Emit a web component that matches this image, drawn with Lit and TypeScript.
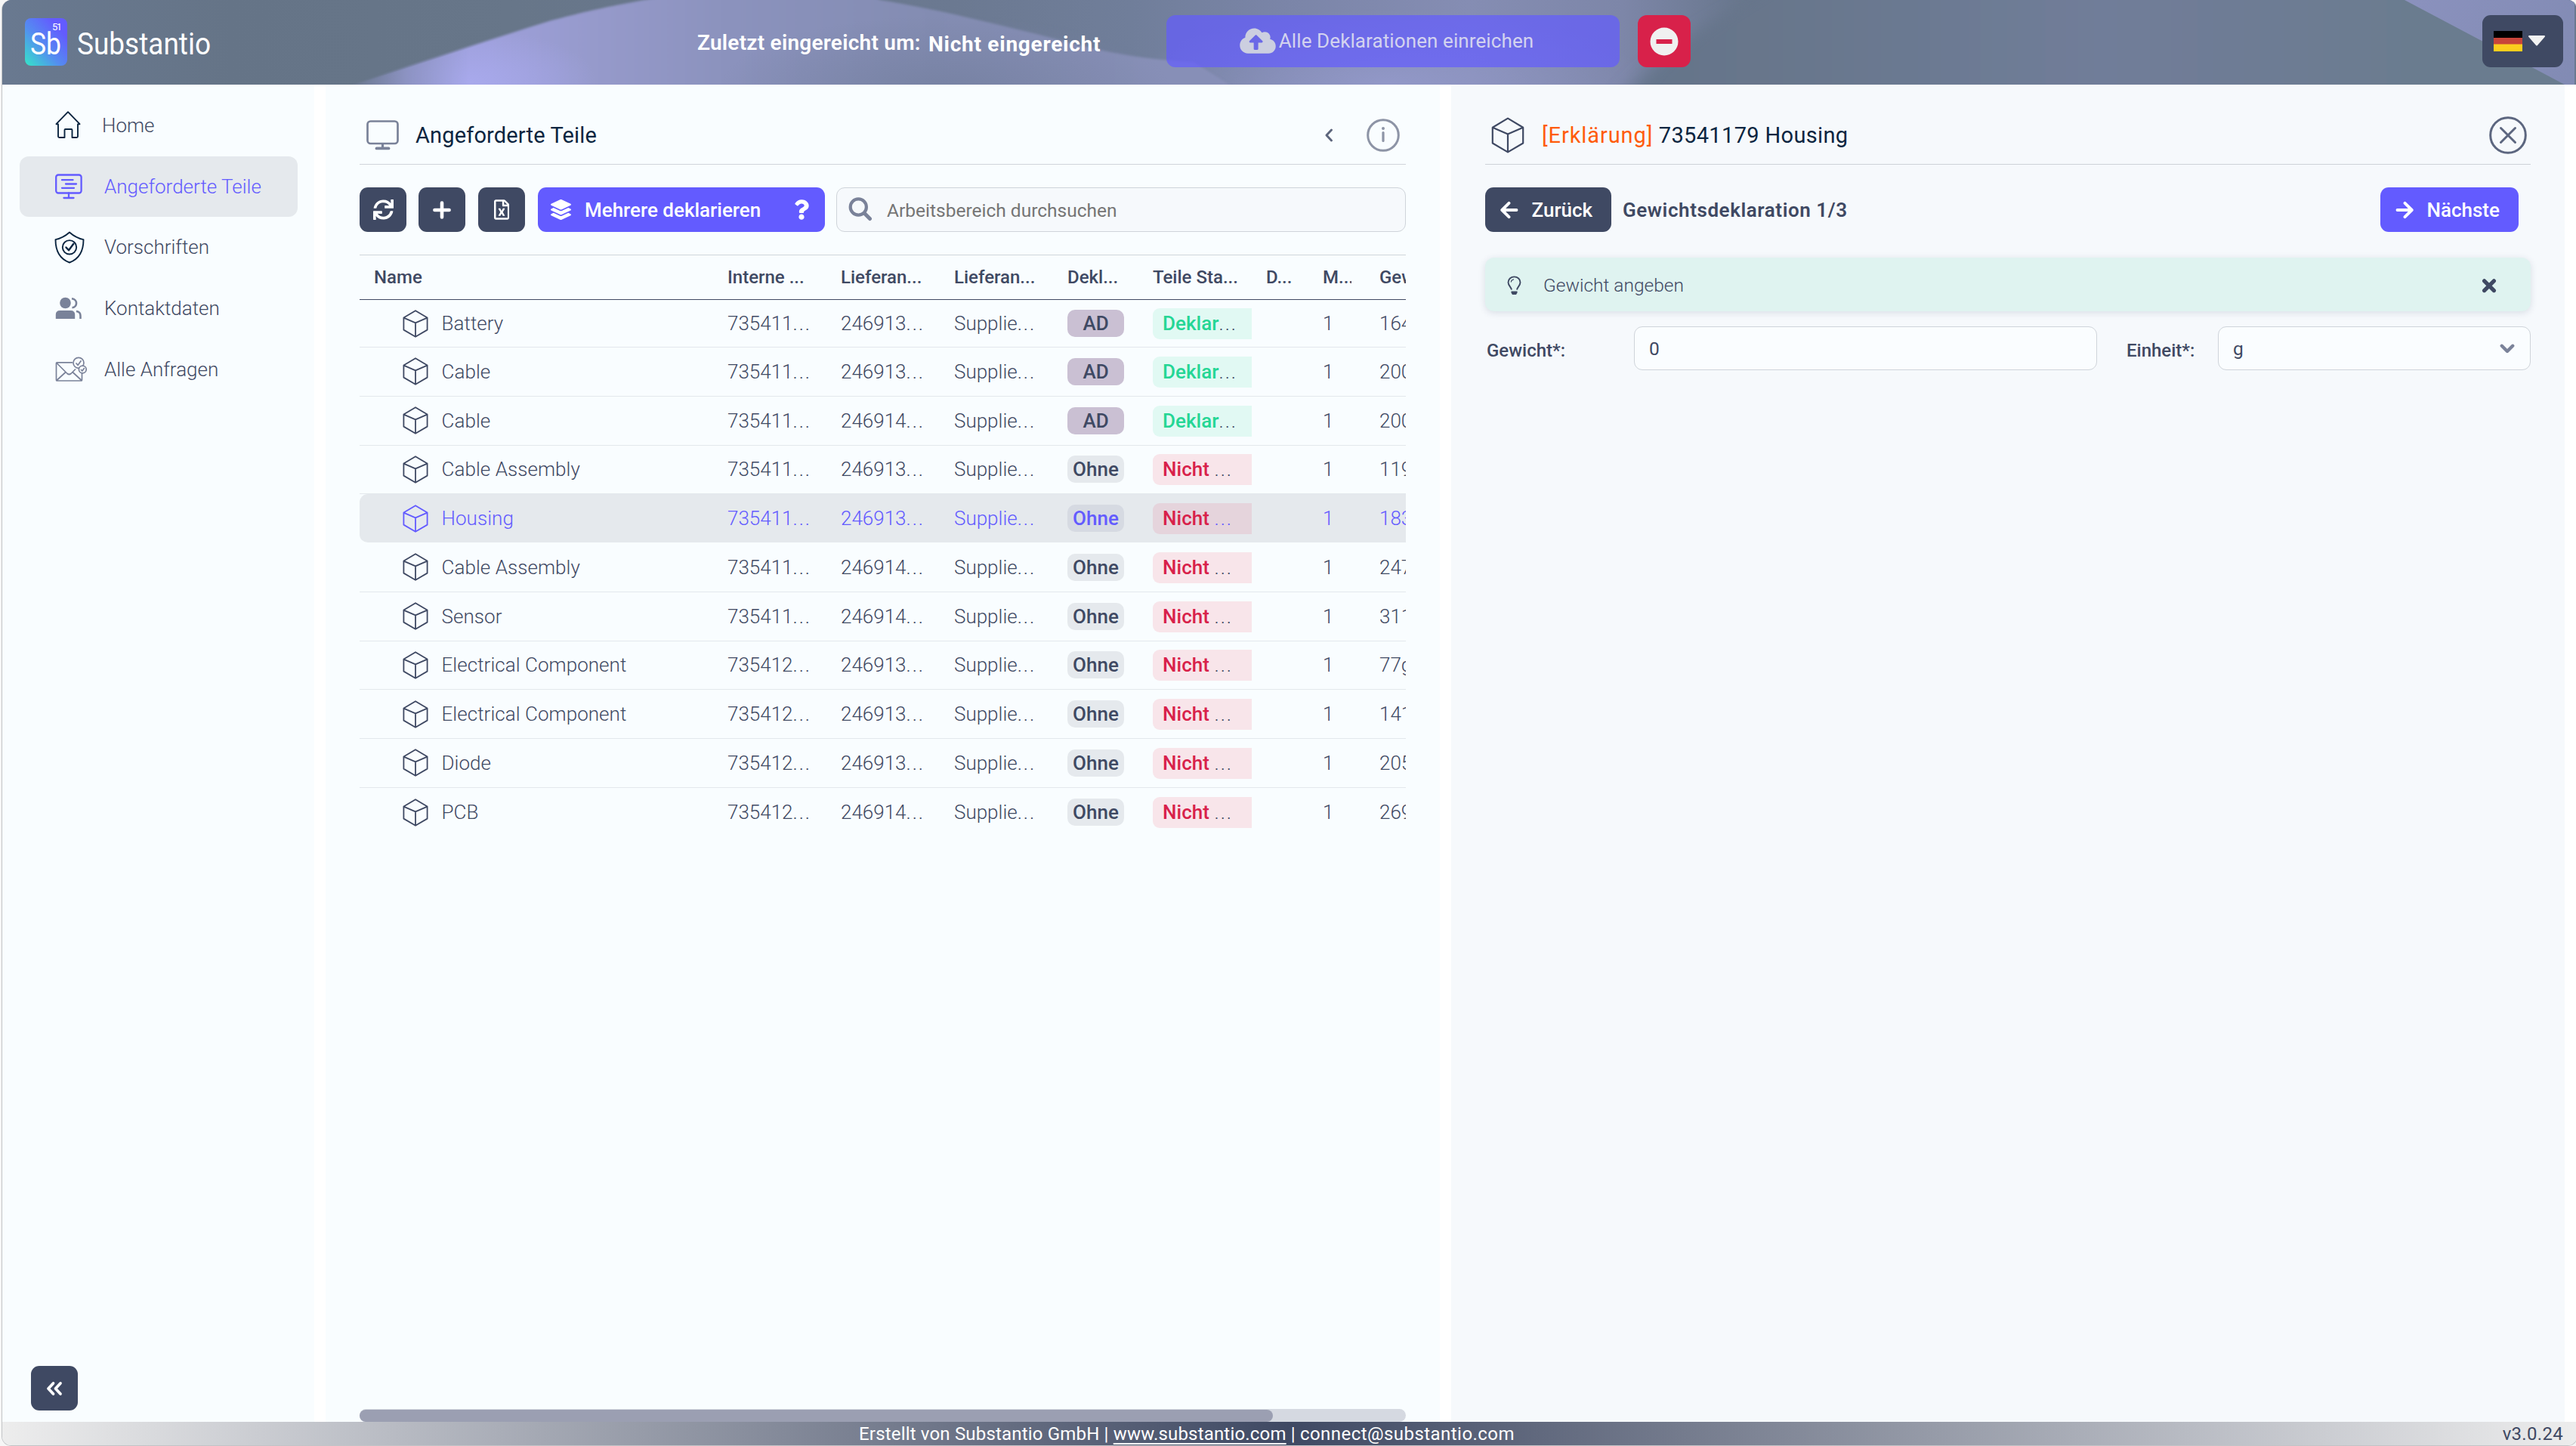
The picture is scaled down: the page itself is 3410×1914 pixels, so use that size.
import { LitElement, html, svg, css } from "lit";
import { customElement } from "lit/decorators.js";
import { classMap } from "lit/directives/class-map.js";

const shared = css`
  * { box-sizing: border-box; }
  svg { display: block; flex: none; }
  .btn {
    display: flex;
    align-items: center;
    height: 59px;
    border-radius: 11px;
    background: #3f4963;
    color: #fff;
    font-size: 26px;
    white-space: nowrap;
    flex: none;
  }
  .square { width: 62px; justify-content: center; }
  .primary { background: #635bff; }
`;

const cube = (w: number, h: number, stroke: number) => html`
  <svg width=${w} height=${h} viewBox="0 0 34 37" fill="none" stroke="currentColor" stroke-width=${stroke} stroke-linejoin="round">
    <path d="M17 1.2 32.6 10.6V26.6L17 35.8 1.4 26.6V10.6ZM1.4 10.6 17 17.4 32.6 10.6M17 17.4V35.8" />
  </svg>`;

const homeIcon = html`
  <svg width="36" height="38" viewBox="0 0 36 38" fill="none" stroke="#0b2540" stroke-width="1.9" stroke-linejoin="round">
    <path d="M2.5 18.2 18 2.2 33.500 18.200 31 18.500V34.500Q31 36 29.500 36H23.500V26Q23.500 25 22.500 25H14.500Q13.500 25 13.500 26V36H6.500Q5 36 5 34.500V18.500Z" />
  </svg>`;

const requestedIcon = html`
  <svg width="36" height="34" viewBox="0 0 36 34" fill="none" stroke="#635bff" stroke-width="2.300" stroke-linecap="round">
    <rect x="1.200" y="1.500" width="33.400" height="24" rx="3" />
    <path d="M9 8.200H23.500M14 13.500H28M9 18.800H25M18 25.500V31.500M11.500 32H24.500" />
  </svg>`;

const shieldIcon = html`
  <svg width="40" height="43" viewBox="0 0 40 43" fill="none" stroke="#0b2540" stroke-width="1.900" stroke-linejoin="round" stroke-linecap="round">
    <path d="M20 1.500C15 6 8.500 9.500 1.500 11.200 1.500 27 8 37 20 41.500 32 37 38.500 27 38.500 11.200 31.500 9.500 25 6 20 1.500Z" />
    <circle cx="20" cy="21.300" r="9.200" />
    <path d="M15.500 21.500 19 25.300 25.300 16.800" stroke-width="2.400" />
  </svg>`;

const peopleIcon = html`
  <svg width="36" height="30" viewBox="0 0 36 30" fill="#7a8299">
    <circle cx="13.500" cy="8" r="7.300" />
    <path d="M.8 29V23.500Q.8 18 6.500 18H20.500Q26.200 18 26.200 23.500V29Z" />
    <path d="M22 2.200C30 3 30 13.500 22.500 14.200M28 19Q33.500 19.500 33.500 25V29" fill="none" stroke="#7a8299" stroke-width="2.600" />
  </svg>`;

const mailIcon = html`
  <svg width="42" height="34" viewBox="0 0 42 34" fill="none" stroke="#7a8299" stroke-width="1.700" stroke-linejoin="round">
    <path d="M23 7.800H2.500Q1.500 7.800 1.500 8.800V31Q1.500 32 2.500 32H34.500Q35.500 32 35.500 31V21M2 8.500 16 22.500Q18.500 24.500 21 22.500L27 16.500M2 31.500 14 20.500M35 31.500 23 20.500" />
    <circle cx="31" cy="8.300" r="7" />
    <circle cx="36.300" cy="17" r="4.900" fill="#f9fdff" />
    <path d="M27.500 8.500 30.200 11.300 34.500 5.300M34 17 35.800 19 38.800 14.900" />
  </svg>`;

const monitorIcon = html`
  <svg width="43" height="40" viewBox="0 0 43 40" fill="none" stroke="#7a8299" stroke-width="2.700" stroke-linecap="round">
    <rect x="1.500" y="1.500" width="40" height="29.500" rx="4" />
    <path d="M21.500 31V37" stroke-width="3.200" stroke-linecap="butt" />
    <path d="M13.500 37.400H29.500" stroke-width="3.800" />
  </svg>`;

const syncIcon = html`
  <svg width="27" height="27" viewBox="0 0 512 512" fill="#fff">
    <path d="M440.65 12.57l4 82.77A247.16 247.16 0 0 0 255.83 8C134.73 8 33.91 94.92 12.29 209.82A12 12 0 0 0 24.09 224h49.05a12 12 0 0 0 11.67-9.26 175.91 175.91 0 0 1 317-56.94l-101.46-4.86a12 12 0 0 0-12.57 12v47.41a12 12 0 0 0 12 12H500a12 12 0 0 0 12-12V12a12 12 0 0 0-12-12h-47.37a12 12 0 0 0-11.98 12.57zM255.83 432a175.61 175.61 0 0 1-146-77.8l101.8 4.87a12 12 0 0 0 12.57-12v-47.4a12 12 0 0 0-12-12H12a12 12 0 0 0-12 12V500a12 12 0 0 0 12 12h47.35a12 12 0 0 0 12-12.6l-4.15-82.57A247.17 247.17 0 0 0 255.83 504c121.11 0 221.93-86.92 243.55-201.82a12 12 0 0 0-11.8-14.18h-49.05a12 12 0 0 0-11.67 9.26A175.86 175.86 0 0 1 255.83 432z" />
  </svg>`;

const plusIcon = html`
  <svg width="26" height="26" viewBox="0 0 26 26" stroke="#fff" stroke-width="4.600" stroke-linecap="round">
    <path d="M13 3.600V22.400M3.400 13H22.600" />
  </svg>`;

const excelIcon = html`
  <svg width="20" height="27" viewBox="0 0 384 512" fill="#fff">
    <path d="M369.9 97.9L286 14C277 5 264.800 0 252.100 0H48C21.500 0 0 21.500 0 48v416c0 26.500 21.500 48 48 48h288c26.500 0 48-21.500 48-48V131.900c0-12.700-5.100-25-14.100-34zM332.100 128H256V51.900l76.100 76.100zM48 464V48h160v104c0 13.300 10.700 24 24 24h112v288H48zm212-240h-28.800c-4.400 0-8.400 2.400-10.500 6.300-18 33.100-22.200 42.400-28.600 57.700-13.900-29.100-6.900-17.300-28.600-57.700-2.100-3.900-6.200-6.300-10.600-6.300H124c-9.300 0-15 10-10.400 18l46.300 78-46.300 78c-4.700 8 1.100 18 10.400 18h28.900c4.400 0 8.400-2.400 10.500-6.300 21.700-40 23-45 28.600-57.700 14.900 30.200 5.900 15.900 28.600 57.700 2.100 3.900 6.200 6.300 10.600 6.300H260c9.300 0 15-10 10.400-18L224 320c.7-1.100 30.300-50.500 46.300-78 4.700-8-1.100-18-10.300-18z" />
  </svg>`;

const layersIcon = html`
  <svg width="27" height="27" viewBox="0 0 512 512" fill="#fff">
    <path d="M12.410 148.020l232.940 105.670c6.800 3.090 14.490 3.090 21.290 0l232.940-105.670c16.550-7.510 16.550-32.520 0-40.030L266.650 2.310a25.607 25.607 0 0 0-21.290 0L12.410 107.980c-16.550 7.510-16.550 32.530 0 40.040zm487.180 88.280l-58.090-26.330-161.640 73.270c-7.560 3.430-15.590 5.170-23.860 5.170s-16.290-1.740-23.860-5.170L70.510 209.970l-58.100 26.330c-16.550 7.500-16.550 32.500 0 40l232.940 105.590c6.800 3.080 14.490 3.080 21.290 0L499.590 276.300c16.550-7.500 16.550-32.500 0-40zm0 127.800l-57.870-26.230-161.860 73.370c-7.560 3.430-15.590 5.170-23.860 5.170s-16.290-1.740-23.860-5.170L70.290 337.870 12.410 364.100c-16.550 7.500-16.550 32.500 0 40l232.940 105.590c6.800 3.080 14.490 3.080 21.290 0L499.590 404.100c16.550-7.500 16.550-32.500 0-40z" />
  </svg>`;

const questionIcon = html`
  <svg width="20" height="27" viewBox="0 0 384 512" fill="#fff">
    <path d="M202.021 0C122.202 0 70.503 32.703 29.914 91.026c-7.363 10.580-5.093 25.086 5.178 32.874l43.138 32.709c10.373 7.865 25.132 6.026 33.253-4.148 25.049-31.381 43.630-49.449 82.757-49.449 30.764 0 68.816 19.799 68.816 49.631 0 22.552-18.617 34.134-48.993 51.164-35.423 19.860-82.299 44.576-82.299 106.405V320c0 13.255 10.745 24 24 24h72.471c13.255 0 24-10.745 24-24v-5.773c0-42.860 125.268-44.645 125.268-160.627C377.504 66.256 286.902 0 202.021 0zM192 373.459c-38.196 0-69.271 31.075-69.271 69.271 0 38.195 31.075 69.270 69.271 69.270s69.271-31.075 69.271-69.271-31.075-69.270-69.271-69.270z" />
  </svg>`;

const searchIcon = html`
  <svg width="32" height="32" viewBox="0 0 32 32" fill="none" stroke="#7a8299" stroke-linecap="round">
    <circle cx="13.300" cy="13" r="10.600" stroke-width="4.200" />
    <path d="M21.500 21.500 28.500 28.500" stroke-width="5" />
  </svg>`;

const cloudIcon = html`
  <svg width="48" height="38" viewBox="0 0 640 512" fill="#cccfe0">
    <path d="M537.600 226.600c4.100-10.700 6.400-22.400 6.400-34.600 0-53-43-96-96-96-19.700 0-38.100 6-53.300 16.200C367 64.200 315.300 32 256 32c-88.400 0-160 71.600-160 160 0 2.700.1 5.400.2 8.100C40.200 219.800 0 273.200 0 336c0 79.500 64.500 144 144 144h368c70.700 0 128-57.300 128-128 0-61.900-44-113.600-102.400-125.400zM393.400 288H328v112c0 8.800-7.200 16-16 16h-48c-8.800 0-16-7.200-16-16V288h-65.400c-14.300 0-21.400-17.200-11.300-27.400l105.400-105.400c6.200-6.200 16.400-6.200 22.600 0l105.400 105.400c10.100 10.200 2.900 27.400-11.300 27.400z" />
  </svg>`;

const arrow = (flip: boolean) => html`
  <svg width="24" height="24" viewBox="0 0 24 24" fill="none" stroke="#fff" stroke-width="3.900" stroke-linecap="round" stroke-linejoin="round">
    ${flip
      ? svg`<path d="M2.500 12H21M12.500 2.800 21.700 12 12.500 21.200" />`
      : svg`<path d="M21.500 12H3M11.500 2.800 2.300 12 11.500 21.200" />`}
  </svg>`;

@customElement("app-header")
class AppHeader extends LitElement {
  static styles = [
    shared,
    css`
      :host { display: block; height: 112px; position: relative; overflow: hidden; background: #697990; }
      .waves { position: absolute; inset: 0; }
      .bar { position: relative; display: flex; align-items: flex-start; height: 112px; color: #fff; }
      .logo { margin: 24px 0 0 30px; }
      .brand { margin: 24px 630px 0 14px; }
      .label { margin-top: 40px; width: 306px; font-size: 28px; line-height: 34px; font-weight: 600; letter-spacing: 0.25px; white-space: nowrap; }
      .value { margin-top: 42px; width: 315px; font-size: 28px; line-height: 34px; font-weight: 700; letter-spacing: 0.75px; white-space: nowrap; }
      .submit {
        margin-top: 20px;
        width: 600px;
        height: 69px;
        border-radius: 12px;
        background: rgba(99, 91, 255, 0.7);
        display: flex;
        align-items: center;
        justify-content: center;
        gap: 4px;
        padding-right: 17px;
        font-size: 26px;
        letter-spacing: 0.1px;
        color: #d3d3ef;
        padding-bottom: 1px;
        white-space: nowrap;
      }
      .deny {
        margin: 20px 0 0 24px;
        width: 70px;
        height: 69px;
        border-radius: 12px;
        background: #d8214a;
        display: flex;
        align-items: center;
        justify-content: center;
      }
      .lang {
        margin: 20px 18px 0 auto;
        width: 107px;
        height: 69px;
        border-radius: 11px;
        background: #3f4963;
        display: flex;
        align-items: center;
        padding-left: 15px;
        gap: 7px;
      }
    `,
  ];

  render() {
    return html`
      <svg class="waves" width="3405" height="112" viewBox="3 0 3405 112" preserveAspectRatio="none">
        <defs>
          <linearGradient id="base" x1="0" x2="1">
            <stop offset="0" stop-color="#697990" />
            <stop offset=".09" stop-color="#657487" />
            <stop offset=".2" stop-color="#677689" />
            <stop offset=".37" stop-color="#6b7991" />
            <stop offset=".44" stop-color="#707e9a" />
            <stop offset=".5" stop-color="#7b85a8" />
            <stop offset=".57" stop-color="#858db3" />
            <stop offset=".63" stop-color="#7d86a8" />
            <stop offset=".68" stop-color="#66758a" />
            <stop offset=".78" stop-color="#6c7b94" />
            <stop offset=".88" stop-color="#6f7d98" />
            <stop offset="1" stop-color="#6b7b90" />
          </linearGradient>
          <linearGradient id="hill" gradientUnits="userSpaceOnUse" x1="470" x2="1560" y1="0" y2="0">
            <stop offset="0" stop-color="#989bd6" />
            <stop offset=".16" stop-color="#9d9fda" />
            <stop offset=".3" stop-color="#9599ca" />
            <stop offset=".45" stop-color="#8b92bd" />
            <stop offset=".7" stop-color="#838cb2" />
            <stop offset="1" stop-color="#878fb7" />
          </linearGradient>
          <radialGradient id="peak" gradientUnits="userSpaceOnUse" cx="0" cy="0" r="1" gradientTransform="translate(620 108) scale(170 70)">
            <stop offset="0" stop-color="#a8a9ec" />
            <stop offset="1" stop-color="#a8a9ec" stop-opacity="0" />
          </radialGradient>
          <radialGradient id="hollow" gradientUnits="userSpaceOnUse" cx="0" cy="0" r="1" gradientTransform="translate(1250 120) scale(300 100)">
            <stop offset="0" stop-color="#7782a3" />
            <stop offset="1" stop-color="#7782a3" stop-opacity="0" />
          </radialGradient>
          <radialGradient id="glow" gradientUnits="userSpaceOnUse" cx="0" cy="0" r="1" gradientTransform="translate(1840 112) scale(340 100)">
            <stop offset="0" stop-color="#9298c8" />
            <stop offset="1" stop-color="#9298c8" stop-opacity="0" />
          </radialGradient>
          <linearGradient id="dark" gradientUnits="userSpaceOnUse" x1="2160" x2="3200" y1="0" y2="0">
            <stop offset="0" stop-color="#64748a" />
            <stop offset=".16" stop-color="#67768b" />
            <stop offset=".6" stop-color="#707d99" />
            <stop offset="1" stop-color="#6b7b8f" />
          </linearGradient>
          <linearGradient id="corner" gradientUnits="userSpaceOnUse" x1="3200" x2="3400" y1="0" y2="100">
            <stop offset="0" stop-color="#8a91bd" />
            <stop offset="1" stop-color="#828bb4" />
          </linearGradient>
          <linearGradient id="fade" gradientUnits="userSpaceOnUse" x1="455" x2="620" y1="0" y2="0">
            <stop offset="0" stop-color="#fff" stop-opacity="0" />
            <stop offset=".5" stop-color="#fff" stop-opacity=".65" />
            <stop offset="1" stop-color="#fff" />
          </linearGradient>
          <mask id="soft" maskUnits="userSpaceOnUse" x="0" y="-30" width="3410" height="180">
            <rect x="0" y="-30" width="3410" height="180" fill="url(#fade)" />
          </mask>
          <filter id="b1" x="-5%" y="-50%" width="110%" height="200%"><feGaussianBlur stdDeviation="1.5" /></filter>
          <filter id="b2" x="-10%" y="-50%" width="120%" height="200%"><feGaussianBlur stdDeviation="16 4" /></filter>
        </defs>
        <rect x="0" width="3410" height="112" fill="url(#base)" />
        <ellipse cx="1840" cy="112" rx="340" ry="100" fill="url(#glow)" />
        <g mask="url(#soft)">
          <path filter="url(#b1)" fill="url(#hill)" d="M450 118C540 88 640 55 730 27 790 11 830 4 870 -3L880-20H1120L1165 0C1250 14 1310 30 1380 47 1450 66 1500 78 1580 82L1640 120Z" />
          <path fill="url(#peak)" d="M450 118C540 90 640 57 730 29L800 40V118Z" />
          <ellipse cx="1250" cy="120" rx="300" ry="100" fill="url(#hollow)" />
        </g>
        <path filter="url(#b2)" fill="url(#dark)" d="M2350-20C2300 10 2210 50 2150 130H3500V-20Z" />
        <path fill="url(#corner)" d="M3183 0 3395 112H3410V0Z" />
      </svg>
      <div class="bar">
        <svg class="logo" width="56" height="63" viewBox="0 0 56 63" font-family="Roboto, sans-serif" fill="#fff">
          <defs>
            <linearGradient id="lg" x1="0" y1="1" x2="1" y2="0">
              <stop offset="0" stop-color="#34e6c8" />
              <stop offset=".42" stop-color="#548df0" />
              <stop offset=".8" stop-color="#635bff" />
            </linearGradient>
          </defs>
          <rect width="56" height="63" rx="8" fill="url(#lg)" />
          <text x="7" y="48" font-size="41" textLength="41" lengthAdjust="spacingAndGlyphs">Sb</text>
          <text x="36" y="16" font-size="13" textLength="13">51</text>
        </svg>
        <svg class="brand" width="190" height="63" viewBox="0 0 190 63" font-family="Roboto, sans-serif" fill="#fff">
          <text x="-1" y="48" font-size="40" textLength="177" lengthAdjust="spacingAndGlyphs">Substantio</text>
        </svg>
        <div class="label">Zuletzt eingereicht um:</div>
        <div class="value">Nicht eingereicht</div>
        <div class="submit">${cloudIcon}<span>Alle Deklarationen einreichen</span></div>
        <div class="deny">
          <svg width="38" height="38" viewBox="0 0 38 38">
            <circle cx="19" cy="19" r="18.500" fill="#f0f0f0" />
            <rect x="8.500" y="16" width="21" height="6" fill="#d8214a" />
          </svg>
        </div>
        <div class="lang">
          <svg width="38" height="27" viewBox="0 0 38 27">
            <rect width="38" height="9" fill="#000" />
            <rect y="9" width="38" height="9" fill="#c8443a" />
            <rect y="17.500" width="38" height="9.500" fill="#fbcd1e" />
          </svg>
          <svg width="24" height="15" viewBox="0 0 24 15">
            <path d="M2 1H22L12 12.500Z" fill="#f2f2f2" stroke="#f2f2f2" stroke-width="2" stroke-linejoin="round" />
          </svg>
        </div>
      </div>`;
  }
}

@customElement("app-nav")
class AppNav extends LitElement {
  static styles = [
    shared,
    css`
      :host { display: flex; flex-direction: column; width: 412.500px; padding: 14px 22px 15px 23px; background: #f9fdff; flex: none; }
      .item { display: flex; align-items: center; height: 80.600px; padding-left: 47px; font-size: 26px; font-weight: 310; color: #3f4963; border-radius: 12px; }
      .active { background: #e5e9ed; color: #635bff; }
      .icon { width: 65px; display: flex; flex: none; }
      .home .icon { width: 62px; }
      .home svg { margin: -2px 0 0 -1px; }
      .shield { padding-left: 46px; }
      .shield .icon { width: 66px; }
      .collapse { margin: auto 0 0 15px; }
    `,
  ];

  render() {
    const items: [unknown, string, string][] = [
      [homeIcon, "Home", "home"],
      [requestedIcon, "Angeforderte Teile", "active"],
      [shieldIcon, "Vorschriften", "shield"],
      [peopleIcon, "Kontaktdaten", "people"],
      [mailIcon, "Alle Anfragen", "mail"],
    ];
    return html`
      ${items.map(([icon, text, kind]) => html`
        <div class=${classMap({ item: true, [kind]: true })}>
          <span class="icon">${icon}</span><span>${text}</span>
        </div>`)}
      <div class="btn square collapse">
        <svg width="24" height="20" viewBox="0 0 24 20" fill="none" stroke="#fff" stroke-width="3.800" stroke-linecap="round" stroke-linejoin="round">
          <path d="M10.500 3 4 10 10.500 17M20 3 13.500 10 20 17" />
        </svg>
      </div>`;
  }
}

interface Part {
  name: string;
  part: string;
  supplier: string;
  type: string;
  weight: string;
}

const PARTS: Part[] = [
  { name: "Battery", part: "735411", supplier: "246913", type: "AD", weight: "164g" },
  { name: "Cable", part: "735411", supplier: "246913", type: "AD", weight: "200g" },
  { name: "Cable", part: "735411", supplier: "246914", type: "AD", weight: "200g" },
  { name: "Cable Assembly", part: "735411", supplier: "246913", type: "Ohne", weight: "119g" },
  { name: "Housing", part: "735411", supplier: "246913", type: "Ohne", weight: "183g" },
  { name: "Cable Assembly", part: "735411", supplier: "246914", type: "Ohne", weight: "247g" },
  { name: "Sensor", part: "735411", supplier: "246914", type: "Ohne", weight: "311g" },
  { name: "Electrical Component", part: "735412", supplier: "246913", type: "Ohne", weight: "77g" },
  { name: "Electrical Component", part: "735412", supplier: "246913", type: "Ohne", weight: "141g" },
  { name: "Diode", part: "735412", supplier: "246913", type: "Ohne", weight: "205g" },
  { name: "PCB", part: "735412", supplier: "246914", type: "Ohne", weight: "269g" },
];

@customElement("parts-panel")
class PartsPanel extends LitElement {
  static styles = [
    shared,
    css`
      :host { display: flex; flex-direction: column; width: 1475px; padding: 0 45px; background: #f9fdff; flex: none; }
      .title { display: flex; align-items: center; height: 106px; padding: 29px 8px 0 9px; border-bottom: 1px solid #d0d5da; font-size: 29px; letter-spacing: 0.15px; color: #0b2540; }
      .title .text { margin-left: 22px; flex: 1; }
      .title .back { margin-right: 44px; }
      .tools { display: flex; height: 120px; padding-top: 30px; border-bottom: 1px solid #d0d5da; }
      .tools .square { margin-right: 16px; }
      .tools .square:nth-child(2) { margin-right: 17px; }
      .declare { width: 380px; padding: 0 21px 0 17px; margin: 0 15px 0 1px; font-weight: 480; }
      .declare .text { flex: 1; margin-left: 18px; }
      .search { flex: 1; height: 59px; display: flex; align-items: center; border: 1px solid #cfd4da; border-radius: 11px; background: #f6f9fc; padding-left: 15px; font-size: 24.500px; color: #757575; }
      .search svg { margin: -2px 19px 0 0; }
      .search span { padding-top: 2px; }
      .row {
        display: grid;
        grid-template-columns: 487px 150px 150px 150px 113px 150px 75px 75px 35px;
        height: 64.750px;
        align-items: center;
        border-bottom: 1px solid #e3e8ec;
        color: #3f4963;
        font-size: 26px;
        font-weight: 310;
        overflow: hidden;
        white-space: nowrap;
      }
      .row:last-child { border-bottom: 0; }
      .head { height: 59px; border-bottom: 1px solid #3f4963; font-size: 24px; font-weight: 500; }
      .head .name { padding-left: 19px; }
      .head + .row { height: 63px; }
      .cell { overflow: hidden; margin-right: 37px; }
      .cell i { font-style: normal; letter-spacing: 1.900px; }
      .name { display: flex; align-items: center; padding-left: 57px; gap: 17.500px; margin-right: 0; letter-spacing: 0.050px; }
      .wide { margin-right: 19px; }
      .last { margin-right: 0; }
      .selected { background: #e5e9ed; color: #635bff; border-bottom-color: #f9fdff; border-radius: 11px 0 0 11px; }
      .selected .tag { background: #d6dae2; }
      .tag { width: 75px; height: 36px; border-radius: 10px; background: #e5e9ed; display: flex; align-items: center; justify-content: center; font-weight: 490; }
      .ad { background: #cac0d3; }
      .status { height: 41px; line-height: 41px; padding-left: 13px; border-radius: 9px 0 0 9px; background: #f8e5ea; margin-top: 1px; }
      .status b { font-weight: 490; color: #d8214a; letter-spacing: 0.050px; }
      .declared { background: #e1f9f3; }
      .declared b { color: #25d695; }
      .selected .status { background: #e5d4dc; }
      .track { margin-top: auto; height: 17px; border-radius: 9px; background: #d5d9e1; padding-top: 1px; }
      .thumb { width: 1209px; height: 16px; border-radius: 8px; background: #9b9fb2; }
    `,
  ];

  render() {
    const heads = ["Interne ...", "Lieferan...", "Lieferan...", "Dekl..."];
    return html`
      <div class="title">
        ${monitorIcon}
        <span class="text">Angeforderte Teile</span>
        <svg class="back" width="12" height="18" viewBox="0 0 12 18" fill="none" stroke="#5d667d" stroke-width="2.900" stroke-linecap="round" stroke-linejoin="round">
          <path d="M9.500 2 3 9 9.500 16" />
        </svg>
        <svg width="44" height="44" viewBox="0 0 44 44" fill="none" stroke="#8d94a6">
          <circle cx="22" cy="22" r="20.300" stroke-width="3" />
          <path d="M22 18.500V29.500" stroke-width="3.200" stroke-linecap="round" />
          <circle cx="22" cy="13" r="2" fill="#8d94a6" stroke="none" />
        </svg>
      </div>
      <div class="tools">
        <div class="btn square">${syncIcon}</div>
        <div class="btn square">${plusIcon}</div>
        <div class="btn square">${excelIcon}</div>
        <div class="btn primary declare">${layersIcon}<span class="text">Mehrere deklarieren</span>${questionIcon}</div>
        <div class="search">${searchIcon}<span>Arbeitsbereich durchsuchen</span></div>
      </div>
      <div>
        <div class="row head">
          <div class="cell name">Name</div>
          ${heads.map((h) => html`<div class="cell wide">${h}</div>`)}
          <div class="cell wide">Teile Sta...</div>
          <div class="cell wide">D...</div>
          <div class="cell">M...</div>
          <div class="cell last">Gewicht</div>
        </div>
        ${PARTS.map((p) => {
          const ad = p.type === "AD";
          return html`
            <div class=${classMap({ row: true, selected: p.name === "Housing" })}>
              <div class="cell name">${cube(34, 37, 1.8)}<span>${p.name}</span></div>
              <div class="cell wide">${p.part}<i>...</i></div>
              <div class="cell wide">${p.supplier}<i>...</i></div>
              <div class="cell wide">Supplie<i>...</i></div>
              <div class="cell wide"><div class=${classMap({ tag: true, ad })}>${p.type}</div></div>
              <div class="cell wide"><div class=${classMap({ status: true, declared: ad })}><b>${ad ? "Deklar" : "Nicht "}</b><i>...</i></div></div>
              <div></div>
              <div class="cell">1</div>
              <div class="cell last">${p.weight}</div>
            </div>`;
        })}
      </div>
      <div class="track"><div class="thumb"></div></div>`;
  }
}

@customElement("declaration-panel")
class DeclarationPanel extends LitElement {
  static styles = [
    shared,
    css`
      :host { display: block; width: 1474px; margin-left: -0.500px; padding: 0 45px; background: #f6f9fc; flex: none; }
      .title { display: flex; align-items: center; height: 106px; padding: 29px 5px 0 8px; border-bottom: 1px solid #cdd2d8; font-size: 29px; letter-spacing: 0.350px; color: #0b2540; }
      .title .text { margin-left: 23px; flex: 1; }
      .title em { font-style: normal; color: #ff5c0a; letter-spacing: 0.900px; }
      .title svg { color: #3f4963; }
      .steps { display: flex; align-items: center; padding: 30px 16px 34px 0; }
      .back { width: 167px; padding-left: 20px; gap: 17.500px; font-weight: 480; }
      .next { width: 183px; padding-left: 20px; gap: 17.500px; font-weight: 480; }
      .steps h2 { margin: 0 0 0 15px; flex: 1; font-size: 26px; font-weight: 600; letter-spacing: 0.570px; color: #3f4963; }
      .hint { display: flex; align-items: center; height: 71px; padding: 2px 45px 0 29px; border-radius: 12px; background: #dff3f0; box-shadow: 0 2px 10px rgba(40, 60, 90, 0.14); font-size: 24.500px; font-weight: 320; color: #3f4963; }
      .hint span { flex: 1; margin-left: 29px; padding-bottom: 1px; }
      .form { display: flex; align-items: center; padding-top: 20px; color: #3f4963; }
      .form label { font-size: 24px; font-weight: 500; padding: 5px 0 0 2px; width: 197px; }
      .form label.unit { width: 160px; padding-left: 39px; }
      .field { display: flex; align-items: center; width: 613px; height: 58px; border: 1px solid #cfd4da; border-radius: 11px; background: #fafdff; padding: 0 20px 0 19px; font-size: 24.500px; }
      .select { width: 414px; justify-content: space-between; }
    `,
  ];

  render() {
    return html`
      <div class="title">
        ${cube(44, 48, 1.7)}
        <span class="text"><em>[Erklärung]</em> 73541179 Housing</span>
        <svg width="50" height="50" viewBox="0 0 50 50" fill="none" stroke="#5c667f" stroke-width="3" stroke-linecap="round">
          <circle cx="25" cy="25" r="23.300" />
          <path d="M15.500 15.500 34.500 34.500M34.500 15.500 15.500 34.500" />
        </svg>
      </div>
      <div class="steps">
        <div class="btn back">${arrow(false)}<span>Zurück</span></div>
        <h2>Gewichtsdeklaration 1/3</h2>
        <div class="btn primary next">${arrow(true)}<span>Nächste</span></div>
      </div>
      <div class="hint">
        <svg width="19" height="26" viewBox="0 0 19 26" fill="none" stroke="#3f4963" stroke-width="1.900">
          <path d="M6 18.500C5.500 15 1.500 13 1.500 8.800 1.500 4.500 5 1.400 9.500 1.400S17.500 4.500 17.500 8.800C17.500 13 13.500 15 13 18.500" />
          <path d="M5.300 8.500C5.500 6.500 7 5 9 4.800" stroke-width="1.300" />
          <path d="M5.500 20.500H13.500V22.500L12 25H7L5.500 22.500Z" fill="#3f4963" stroke="none" />
        </svg>
        <span>Gewicht angeben</span>
        <svg width="20" height="20" viewBox="0 0 20 20" stroke="#3f4963" stroke-width="5.200" stroke-linecap="round">
          <path d="M3.600 3.800 16.400 16.600M16.400 3.800 3.600 16.600" />
        </svg>
      </div>
      <div class="form">
        <label>Gewicht*:</label>
        <div class="field">0</div>
        <label class="unit">Einheit*:</label>
        <div class="field select">g
          <svg width="20" height="13" viewBox="0 0 20 13" fill="none" stroke="#7a8299" stroke-width="4.400" stroke-linecap="round" stroke-linejoin="round">
            <path d="M2.800 2.800 10 10 17.200 2.800" />
          </svg>
        </div>
      </div>`;
  }
}

@customElement("app-root")
class AppRoot extends LitElement {
  static styles = [
    shared,
    css`
      :host { display: block; width: 3410px; height: 1914px; background: #f6f6f6; overflow: hidden; font-family: Roboto, "Liberation Sans", sans-serif; padding: 0 1px 0 2px; }
      .window { height: 1914px; display: flex; flex-direction: column; border: 1px solid #c2c4c6; border-top: 0; border-radius: 13px; overflow: hidden; background: #fff; }
      .body { flex: 1; display: flex; gap: 15.500px; min-height: 0; }
      .footer {
        height: 31px;
        flex: none;
        display: grid;
        grid-template-columns: 1fr auto 1fr;
        align-items: center;
        background: linear-gradient(90deg, #ededed, #3f4963 50%, #ededed);
        color: #fff;
        font-size: 24px;
        letter-spacing: 0.300px;
        line-height: 30px;
        padding: 0 18px;
        white-space: nowrap;
      }
      .links { grid-column: 2; margin-right: 272px; letter-spacing: 0.180px; }
      .links u { text-underline-offset: 4px; text-decoration-thickness: 2px; }
      .links .mail { letter-spacing: 0.450px; }
      .version { color: #3f4963; text-align: right; }
    `,
  ];

  render() {
    return html`
      <div class="window">
        <app-header></app-header>
        <div class="body">
          <app-nav></app-nav>
          <parts-panel></parts-panel>
          <declaration-panel></declaration-panel>
        </div>
        <div class="footer">
          <div class="links">Erstellt von Substantio GmbH | <u>www.substantio.com</u> | <span class="mail">connect@substantio.com</span></div>
          <div class="version">v3.0.24</div>
        </div>
      </div>`;
  }
}
